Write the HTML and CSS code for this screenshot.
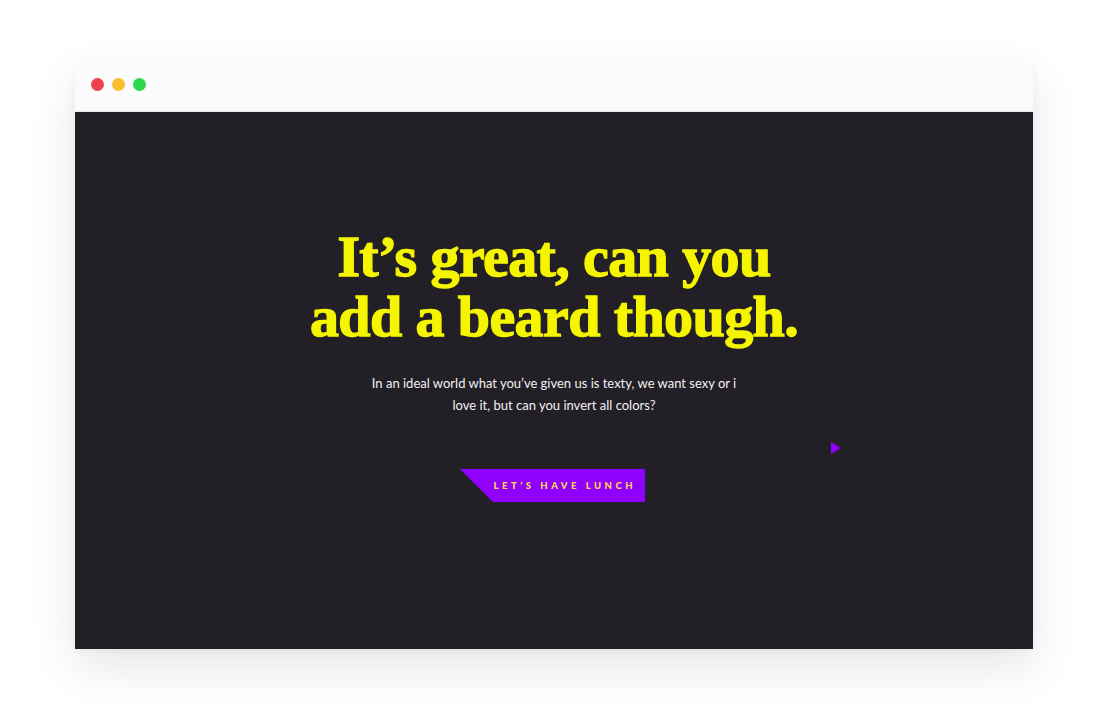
FILE: index.html
```html
<!DOCTYPE html>
<html>
<head>
<meta charset="utf-8">
<link rel="stylesheet" href="styles.css">
</head>
<body>
<div class="window">
  <div class="titlebar">
    <span class="dot red"></span>
    <span class="dot yellow"></span>
    <span class="dot green"></span>
  </div>
  <main class="content">
    <h1 class="headline">It’s great, can you<br>add a beard though.</h1>
    <p class="lead">In an ideal world what you’ve given us is texty, we want sexy or i<br>love it, but can you invert all colors?</p>
    <a class="cta" href="#"><span>LET’S HAVE LUNCH</span></a>
    <span class="pointer"></span>
  </main>
</div>
</body>
</html>
```

FILE: styles.css
```css
* { box-sizing: border-box; }
html, body { margin: 0; padding: 0; }
body {
  background: #ffffff;
  width: 1106px;
  height: 720px;
  overflow: hidden;
  padding: 62px 0 0 75px;
  font-family: "Open Sans", "Liberation Sans", sans-serif;
}
.window {
  width: 958px;
  height: 587px;
  display: flex;
  flex-direction: column;
  background: #fbfbfc;
  box-shadow: 0 18px 45px rgba(0,0,0,0.10), 0 2px 8px rgba(0,0,0,0.04);
}
.titlebar {
  height: 50px;
  display: flex;
  align-items: center;
  gap: 8px;
  padding-left: 16px;
  padding-bottom: 4px;
  border-bottom: 1px solid #e9e9ec;
  background: #fbfbfc;
}
.dot {
  width: 13px;
  height: 13px;
  border-radius: 50%;
  display: block;
}
.red { background: #f0404d; }
.yellow { background: #f9be2c; }
.green { background: #2bd94a; }
.content {
  flex: 1;
  position: relative;
  background: #221f26;
  display: flex;
  flex-direction: column;
  align-items: center;
  padding-top: 115px;
}
.headline {
  margin: 0;
  font-family: "Liberation Serif", serif;
  font-weight: 700;
  font-size: 58px;
  line-height: 60px;
  letter-spacing: -0.6px;
  color: #f5f500;
  -webkit-text-stroke: 1.3px #f5f500;
  text-align: center;
}
.lead {
  margin: 25px 0 0;
  font-family: "Lato", "Liberation Sans", sans-serif;
  font-size: 13px;
  line-height: 22px;
  color: #f2f2f2;
  text-align: center;
}
.cta {
  margin-top: 53px;
  width: 185px;
  height: 33px;
  margin-right: 3px;
  background: #9000ff;
  clip-path: polygon(0 0, 100% 0, 100% 100%, 33px 100%);
  display: flex;
  align-items: center;
  justify-content: flex-end;
  padding-right: 9px;
  text-decoration: none;
}
.cta span {
  font-family: "Lato", "Liberation Sans", sans-serif;
  font-weight: 900;
  font-size: 9.5px;
  letter-spacing: 3.5px;
  color: #ffd84a;
}
.pointer {
  position: absolute;
  left: 756px;
  top: 330px;
  width: 0;
  height: 0;
  border-top: 6.5px solid transparent;
  border-bottom: 6.5px solid transparent;
  border-left: 10px solid #9000ff;
}
```
